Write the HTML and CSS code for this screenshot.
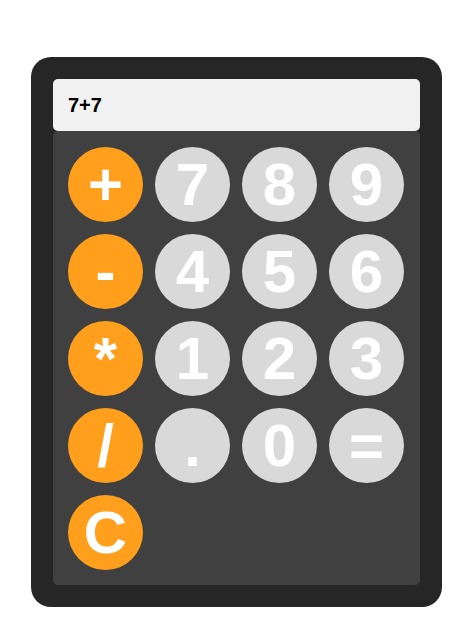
FILE: index.html
```html
<!DOCTYPE html>
<html>
<head>
<meta charset="utf-8">
<link rel="stylesheet" href="styles.css">
</head>
<body>
<div class="calc">
  <div class="display">7+7</div>
  <div class="keypad">
    <div class="btn op">+</div>
    <div class="btn">7</div>
    <div class="btn">8</div>
    <div class="btn">9</div>
    <div class="btn op">-</div>
    <div class="btn">4</div>
    <div class="btn">5</div>
    <div class="btn">6</div>
    <div class="btn op">*</div>
    <div class="btn">1</div>
    <div class="btn">2</div>
    <div class="btn">3</div>
    <div class="btn op">/</div>
    <div class="btn">.</div>
    <div class="btn">0</div>
    <div class="btn">=</div>
    <div class="btn op">C</div>
  </div>
</div>
</body>
</html>
```
FILE: styles.css
```css
* { box-sizing: border-box; }
body {
  margin: 0;
  background: #ffffff;
  font-family: "Liberation Sans", Arial, sans-serif;
}
.calc {
  width: 411px;
  margin: 57px 0 0 31px;
  padding: 22px;
  background: #262626;
  border-radius: 20px;
}
.display {
  height: 52px;
  line-height: 52px;
  padding-left: 15px;
  background: #f1f1f1;
  border-radius: 5px;
  font-size: 20px;
  font-weight: bold;
  color: #000;
}
.keypad {
  display: flex;
  flex-wrap: wrap;
  padding: 10px 9px 9px 9px;
  background: #404040;
  border-radius: 5px;
}
.btn {
  width: 75px;
  height: 75px;
  margin: 6px;
  border-radius: 50%;
  background: #d9d9d9;
  color: #ffffff;
  font-size: 60px;
  font-weight: bold;
  display: flex;
  align-items: center;
  justify-content: center;
  line-height: 1;
}
.btn.op {
  background: #ff9f1c;
}
```
